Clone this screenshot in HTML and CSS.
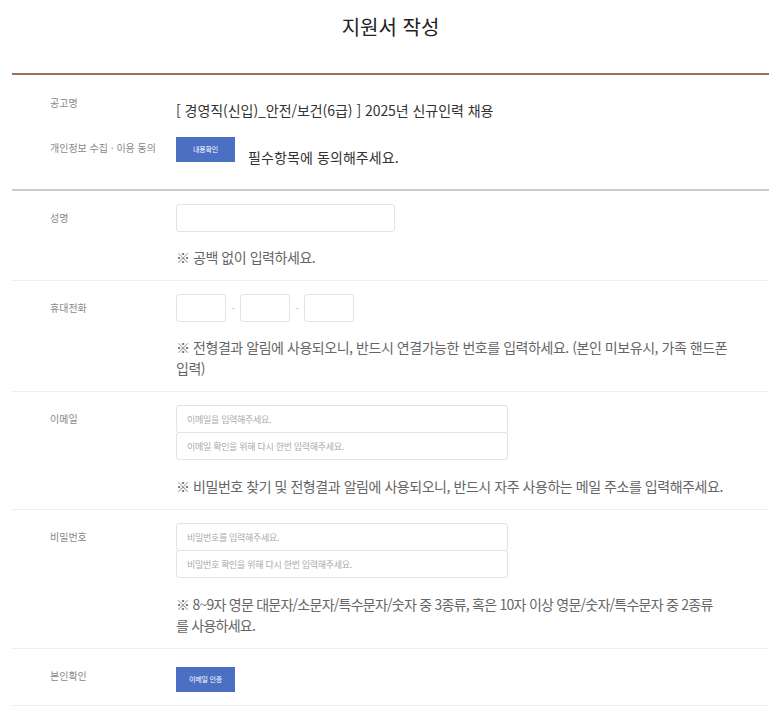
FILE: index.html
```html
<!DOCTYPE html>
<html lang="ko">
<head>
<meta charset="utf-8">
<title>지원서 작성</title>
<link rel="stylesheet" href="styles.css">
</head>
<body>
<div class="page">
  <h1 class="title">지원서 작성</h1>

  <section class="info">
    <div class="row">
      <div class="label">공고명</div>
      <div class="notice-title">[ 경영직(신입)_안전/보건(6급) ] 2025년 신규인력 채용</div>
    </div>
    <div class="row agree">
      <div class="label">개인정보 수집 · 이용 동의</div>
      <div class="agree-line">
        <button type="button" class="btn">내용확인</button>
        <span class="agree-text">필수항목에 동의해주세요.</span>
      </div>
    </div>
  </section>

  <form class="form">
    <div class="frow">
      <div class="label">성명</div>
      <div class="field">
        <input class="input name" type="text">
        <p class="note">※ 공백 없이 입력하세요.</p>
      </div>
    </div>

    <div class="frow">
      <div class="label">휴대전화</div>
      <div class="field">
        <div class="phone">
          <input class="input tel" type="text">
          <span class="dash">-</span>
          <input class="input tel" type="text">
          <span class="dash">-</span>
          <input class="input tel" type="text">
        </div>
        <p class="note">※ 전형결과 알림에 사용되오니, 반드시 연결가능한 번호를 입력하세요. (본인 미보유시, 가족 핸드폰<br>입력)</p>
      </div>
    </div>

    <div class="frow">
      <div class="label">이메일</div>
      <div class="field">
        <div class="stack">
          <input class="input wide" type="text" placeholder="이메일을 입력해주세요.">
          <input class="input wide" type="text" placeholder="이메일 확인을 위해 다시 한번 입력해주세요.">
        </div>
        <p class="note">※ 비밀번호 찾기 및 전형결과 알림에 사용되오니, 반드시 자주 사용하는 메일 주소를 입력해주세요.</p>
      </div>
    </div>

    <div class="frow">
      <div class="label">비밀번호</div>
      <div class="field">
        <div class="stack">
          <input class="input wide" type="password" placeholder="비밀번호를 입력해주세요.">
          <input class="input wide" type="password" placeholder="비밀번호 확인을 위해 다시 한번 입력해주세요.">
        </div>
        <p class="note note-tight">※ 8~9자 영문 대문자/소문자/특수문자/숫자 중 3종류, 혹은 10자 이상 영문/숫자/특수문자 중 2종류<br>를 사용하세요.</p>
      </div>
    </div>

    <div class="frow verify">
      <div class="label">본인확인</div>
      <div class="field">
        <button type="button" class="btn">이메일 인증</button>
      </div>
    </div>
  </form>
</div>
</body>
</html>
```
FILE: styles.css
```css
* {
  box-sizing: border-box;
}

body {
  margin: 0;
  background: #ffffff;
  font-family: "Noto Sans CJK KR", "Noto Sans", sans-serif;
  color: #333333;
}

.page {
  margin-left: 12px;
  width: 757px;
}

.title {
  margin: 0;
  padding: 12px 0 31px;
  text-align: center;
  font-size: 20px;
  line-height: 30px;
  font-weight: 400;
  color: #222222;
}

.info {
  border-top: 2px solid #9c6f5a;
  border-bottom: 2px solid #cccccc;
  padding: 21px 0 22px;
}

.row {
  display: grid;
  grid-template-columns: 164px 1fr;
  align-items: start;
}

.row.agree {
  margin-top: 17px;
}

.label {
  padding-left: 38px;
  font-size: 10px;
  line-height: 14px;
  letter-spacing: 0;
  color: #888888;
}

.row.agree .label {
  padding-top: 4px;
}

.notice-title {
  padding-top: 4px;
  font-size: 14px;
  line-height: 20px;
  letter-spacing: -0.05px;
  color: #333333;
}

.agree-line {
  display: flex;
  align-items: flex-start;
}

.agree-text {
  margin-left: 13px;
  padding-top: 10px;
  font-size: 14px;
  line-height: 20px;
  letter-spacing: 0.1px;
  color: #333333;
}

.btn {
  width: 59px;
  height: 25px;
  padding: 0;
  border: 0;
  border-radius: 0;
  background: #4a6fc3;
  color: #ffffff;
  font-family: "Noto Sans CJK KR", "Noto Sans", sans-serif;
  font-size: 7px;
  line-height: 25px;
  letter-spacing: -0.2px;
  cursor: pointer;
}

.frow {
  display: grid;
  grid-template-columns: 164px 1fr;
  align-items: start;
  padding: 13px 0 12px;
  border-bottom: 1px solid #eeeeee;
}

.frow .label {
  line-height: 28px;
}

.frow.verify {
  padding: 14px 0 13px;
}

.frow.verify .label {
  line-height: 25px;
}

.input {
  display: block;
  height: 28px;
  margin: 0;
  padding: 0 10px;
  border: 1px solid #e3e3e3;
  border-radius: 3px;
  background: #ffffff;
  font-family: "Noto Sans CJK KR", "Noto Sans", sans-serif;
  font-size: 9px;
  letter-spacing: -0.3px;
  color: #333333;
  outline: none;
}

.input::placeholder {
  color: #aaaaaa;
}

.input.name {
  width: 219px;
}

.input.wide {
  width: 332px;
}

.input.tel {
  width: 50px;
}

.phone {
  display: flex;
  align-items: center;
}

.dash {
  width: 14px;
  text-align: center;
  font-size: 9px;
  color: #aaaaaa;
}

.stack .input + .input {
  margin-top: -1px;
}

.note {
  margin: 15px 0 0;
  font-size: 14px;
  line-height: 21px;
  letter-spacing: -0.45px;
  color: #666666;
}

.note-tight {
  letter-spacing: -0.75px;
}

.stack + .note {
  margin-top: 16px;
}
```
